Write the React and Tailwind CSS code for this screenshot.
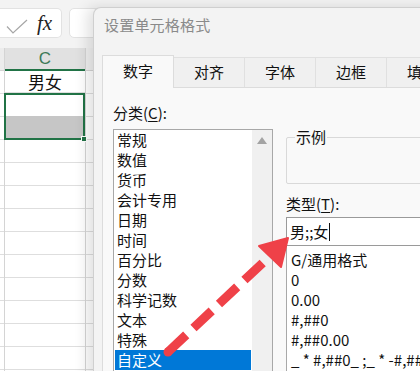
import React from "react";

const cjk = "font-['Noto_Sans_CJK_SC','Noto_Sans',sans-serif]";

const leftItems = ["常规", "数值", "货币", "会计专用", "日期", "时间", "百分比", "分数", "科学记数", "文本", "特殊", "自定义"];
const rightItems = ["G/通用格式", "0", "0.00", "#,##0", "#,##0.00", "_ * #,##0_ ;_ * -#,##0_ ;_ * \"-\"_ ;_ @_ "];

export default function App() {
  const rowsBelow = Array.from({ length: 10 });
  return (
    <div className={`relative w-[420px] h-[371px] overflow-hidden bg-white ${cjk}`}>
      {/* formula bar */}
      <div className="h-[48px] bg-[#f3f3f3] flex items-start pt-[8px] gap-[7px]">
        <div className="w-[62px] h-[30px] bg-white border border-[#e2e2e2] rounded-r-[5px] border-l-0 flex items-center relative">
          <svg width="30" height="30" viewBox="0 0 30 30" className="absolute left-0 top-0">
            <polyline points="7,17.5 13,24 27,11" fill="none" stroke="#a6a6a6" strokeWidth="1.2" />
          </svg>
          <span className="absolute left-[37px] top-[1px] text-[21px] italic font-['Liberation_Serif',serif] text-[#222] leading-[26px]">
            fx
          </span>
        </div>
        <div className="flex-1 h-[30px] bg-white border border-[#e2e2e2] rounded-[5px]" />
      </div>

      {/* grid */}
      <div className="flex">
        <div className="w-[4px] shrink-0 flex flex-col">
          <div className="h-[23px] bg-[#ececec] border-b border-[#d4d4d4]" />
          {Array.from({ length: 14 }).map((_, i) => (
            <div key={i} className="h-[23px] border-b border-[#dedede] shrink-0" />
          ))}
        </div>
        <div className="w-[81px] shrink-0 flex flex-col border-l border-[#d4d4d4]">
          <div className="h-[23px] bg-[#e1e1e1] border-b-2 border-[#217346] flex items-center justify-center text-[17px] text-[#3d7a58] font-['Liberation_Sans',sans-serif] leading-none">
            C
          </div>
          <div className="h-[22px] border-b border-[#dedede] flex items-center justify-center text-[17px] text-[#111] leading-none pb-[1px]">
            男女
          </div>
          <div className="relative h-[47px] border-2 border-[#217346] flex flex-col -ml-[1px]">
            <div className="h-[21px] bg-white" />
            <div className="h-[22px] bg-[#c6c6c6]" />
            <div className="absolute -right-[4px] -bottom-[4px] w-[6px] h-[6px] bg-[#217346] border border-white" />
          </div>
          {rowsBelow.map((_, i) => (
            <div key={i} className="h-[23px] border-b border-[#dedede] shrink-0" />
          ))}
        </div>
        <div className="flex-1 flex flex-col border-l border-[#d4d4d4]">
          <div className="h-[23px] bg-[#f0f0f0] border-b border-[#d4d4d4]" />
          {Array.from({ length: 14 }).map((_, i) => (
            <div key={i} className="h-[23px] border-b border-[#dedede] shrink-0" />
          ))}
        </div>
      </div>

      {/* dialog window */}
      <div className="absolute left-[93px] top-[7px] w-[420px] h-[400px] bg-[#f3f3f3] rounded-tl-[8px] border-l border-t border-[#cfcfcf] shadow-[-6px_0_14px_rgba(0,0,0,0.12)] flex flex-col">
        <div className="h-[47px] pl-[10px] pt-[7px] text-[15px] leading-[20px] text-[#8a8a8a] tracking-[0.2px]">
          设置单元格格式
        </div>
        <div className="flex items-end ml-[8px] h-[33px]">
          <div className="w-[72px] shrink-0 h-[33px] bg-[#f9f9f9] border border-b-0 border-[#dcdcdc] flex items-center justify-center text-[15px] text-[#111] relative z-10 -mb-[1px] pb-[2px] whitespace-nowrap">
            数字
          </div>
          {["对齐", "字体", "边框", "填充"].map((t) => (
            <div key={t} className="w-[71px] shrink-0 h-[30px] bg-[#f0f0f0] border border-l-0 border-b-0 border-[#e0e0e0] flex items-center justify-center text-[15px] text-[#111] whitespace-nowrap">
              {t}
            </div>
          ))}
        </div>
        <div className="flex-1 ml-[8px] bg-[#f9f9f9] border border-[#dcdcdc] flex pl-[10px] gap-[13px]">
          <div className="w-[160px] shrink-0 flex flex-col">
            <div className="pt-[15px] text-[15px] leading-[20px] text-[#111]">
              分类(<span className="underline underline-offset-2">C</span>):
            </div>
            <div className="mt-[6px] h-[260px] bg-white border border-[#a8a8a8] flex">
              <div className="flex-1 flex flex-col px-[1px]">
                {leftItems.map((t) => (
                  <div
                    key={t}
                    className={`h-[20px] shrink-0 pl-[2px] text-[15px] leading-[20px] ${
                      t === "自定义" ? "bg-[#0078d7] text-white" : "text-[#111]"
                    }`}
                  >
                    {t}
                  </div>
                ))}
              </div>
              <div className="w-[20px] bg-[#f0f0f0] flex justify-center pt-[7px]">
                <svg width="10" height="7" viewBox="0 0 10 7">
                  <polygon points="5,0 10,7 0,7" fill="#a3a3a3" />
                </svg>
              </div>
            </div>
          </div>
          <div className="w-[200px] shrink-0 flex flex-col pt-[49px]">
            <div className="relative h-[47px] border border-[#d9d9d9] rounded-[2px]">
              <span className="absolute -top-[11px] left-[8px] px-[1px] bg-[#f9f9f9] text-[15px] leading-[20px] text-[#111]">
                示例
              </span>
            </div>
            <div className="mt-[10px] text-[15px] leading-[20px] text-[#111]">
              类型(<span className="underline underline-offset-2">T</span>):
            </div>
            <div className="mt-[3px] h-[29px] bg-white border border-[#9a9a9a] flex items-center pl-[3px] text-[15px] text-[#111] leading-[20px]">
              男;;女
              <span className="inline-block w-[1px] h-[18px] bg-[#111] ml-[1px]" />
            </div>
            <div className="h-[160px] bg-white border border-t-0 border-[#a8a8a8] pt-[4px] pl-[4px] overflow-hidden">
              {rightItems.map((t) => (
                <div key={t} className="h-[20px] text-[15px] leading-[20px] text-[#111] whitespace-pre">
                  {t}
                </div>
              ))}
            </div>
          </div>
        </div>
      </div>

      {/* red dashed arrow */}
      <svg className="absolute left-0 top-0 pointer-events-none" width="420" height="371" viewBox="0 0 420 371">
        <line x1="168" y1="352" x2="270" y2="256" stroke="#ef4148" strokeWidth="9" strokeDasharray="25 10" strokeLinecap="butt" />
        <circle cx="168" cy="352" r="4.5" fill="#ef4148" />
        <polygon points="288,238 259,246 281,267" fill="#ef4148" strokeLinejoin="round" stroke="#ef4148" strokeWidth="2" />
      </svg>
    </div>
  );
}
